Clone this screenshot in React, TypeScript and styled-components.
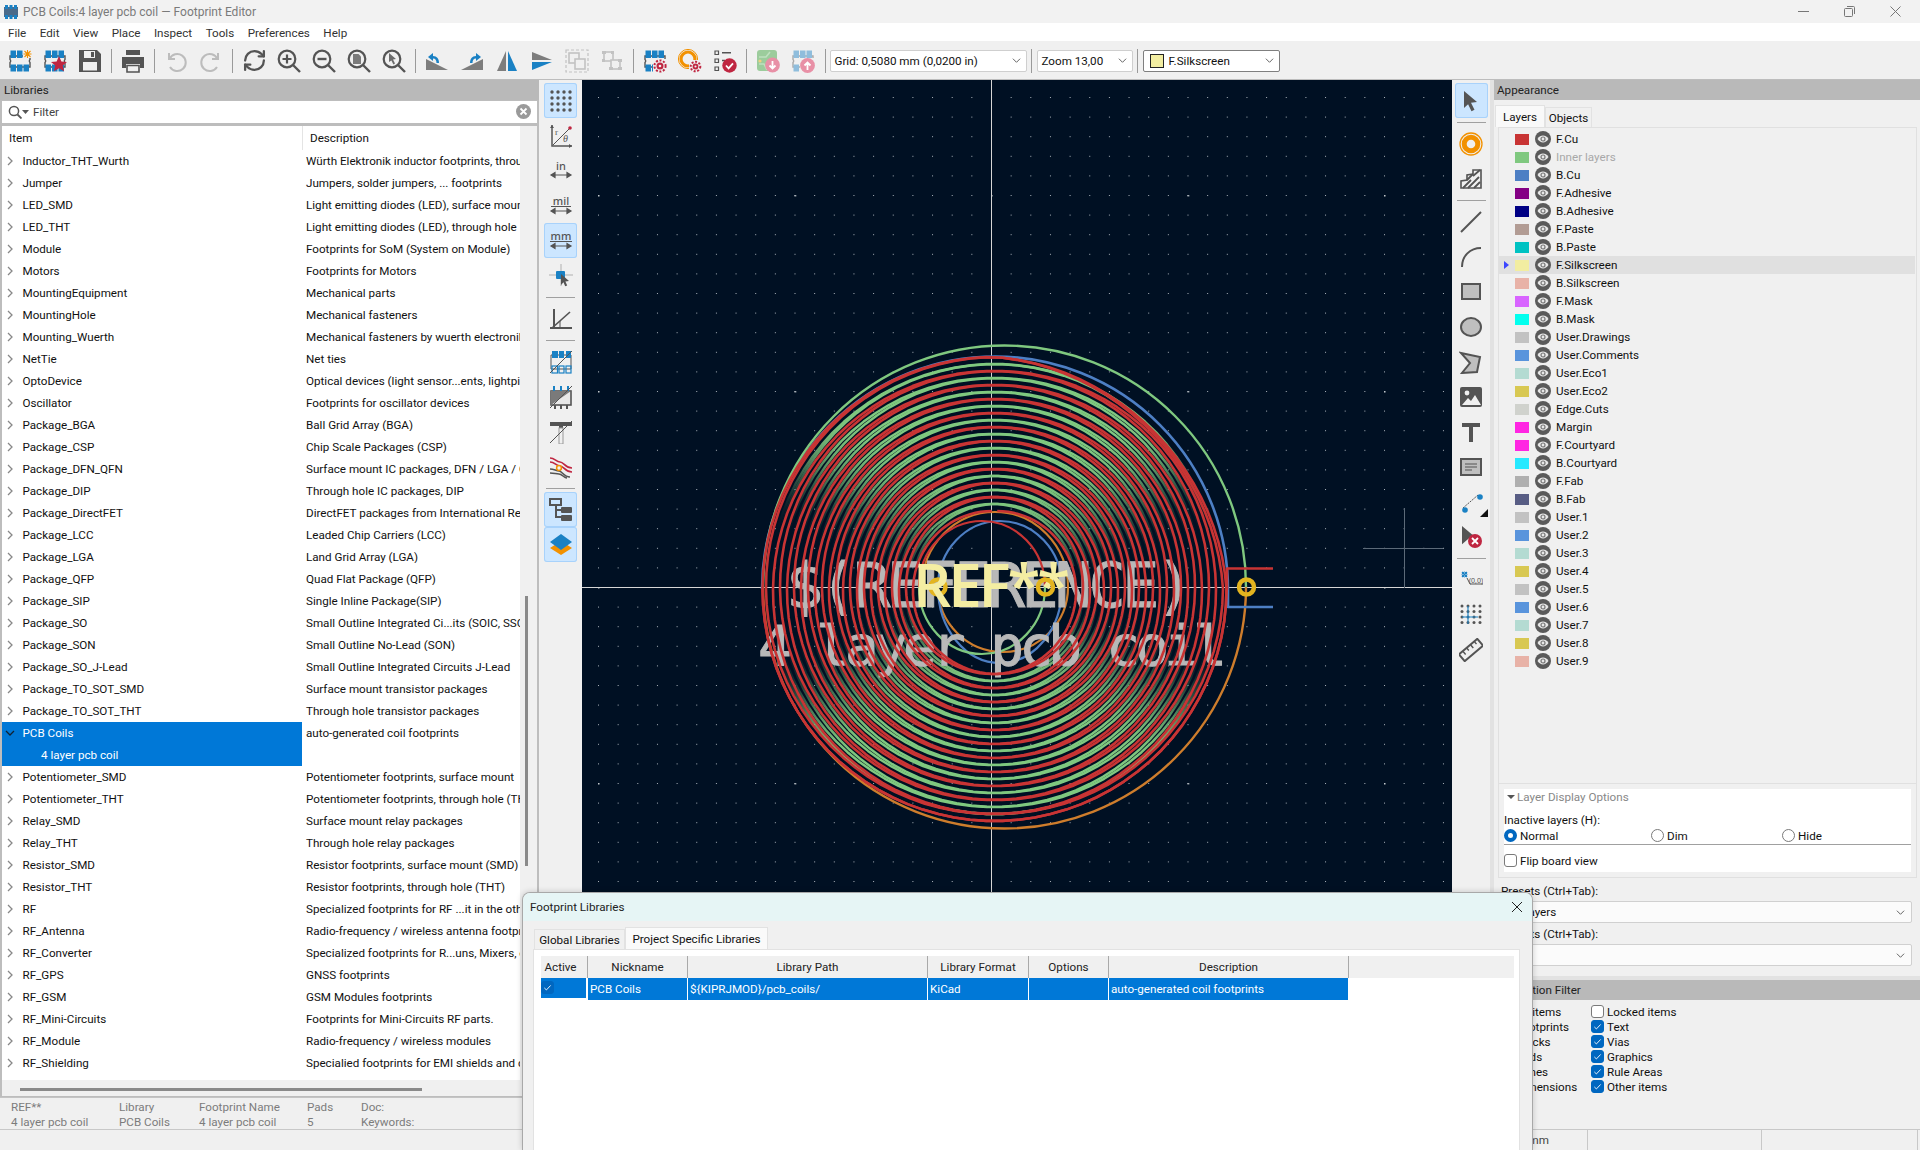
import React from 'react';
import styled, { createGlobalStyle } from 'styled-components';
import { RefreshCw } from 'lucide-react';

const UI = 'Roboto, "Noto Sans", sans-serif';
const DK = '#545454';
const BL = '#1a81c4';
const RD = '#bf2641';
const OR = '#f29100';

const Global = createGlobalStyle`
  html, body { margin: 0; padding: 0; width: 1920px; height: 1150px; overflow: hidden; background: #f0f0f0; }
  #root { width: 1920px; height: 1150px; }
  * { box-sizing: border-box; }
`;

const Win = styled.div`
  position: relative; width: 1920px; height: 1150px; display: flex; flex-direction: column;
  font: 11.65px/12px ${UI}; color: #111; overflow: hidden; background: #f0f0f0;
`;
const TitleBar = styled.div`
  height: 23px; flex: none; display: flex; align-items: center; background: #f2f2f2; color: #7a7a7a; padding-left: 3px; font-size: 12px;
`;
const TitleText = styled.span`margin-left: 4px; flex: 1;`;
const WinControls = styled.div`display: flex; gap: 35px; padding-right: 19px; align-items: center;`;
const MenuBar = styled.div`height: 18px; flex: none; background: #fff; display: flex; align-items: center; padding: 1px 0 0 8px; gap: 13.5px; color: #333;`;
const TopBar = styled.div`
  height: 39px; flex: none; display: flex; align-items: center; padding: 1px 0 0 2.5px; background: #f0f0f0; border-bottom: 1px solid #bdbdbd;
`;
const Slot = styled.div`width: 35px; height: 37px; display: flex; align-items: center; justify-content: center; flex: none;`;
const VSep = styled.div<{ $m?: number }>`width: 1px; height: 24px; background: #9a9a9a; margin: 0 ${p => p.$m ?? 3.5}px; flex: none;`;
const Select = styled.div<{ $w: number; $strong?: boolean }>`
  width: ${p => p.$w}px; height: 22px; flex: none; background: #fff; border: 1px solid ${p => (p.$strong ? '#7f7f7f' : '#cfcfcf')}; border-radius: 2px;
  display: flex; align-items: center; padding: 0 5px 0 4px; color: #111; white-space: nowrap; overflow: hidden;
`;
const SelText = styled.span`flex: 1;`;
const Swatch = styled.span`width: 14px; height: 14px; background: #f2eda1; border: 1px solid #222; margin: 0 5px 0 2px;`;
const Main = styled.div`flex: 1; min-height: 0; display: flex;`;
const LeftCol = styled.div`width: 539px; flex: none; display: flex; flex-direction: column;`;
const Panel = styled.div`flex: 1; min-height: 0; display: flex; flex-direction: column; background: #bdbdbd; padding: 0 2px 1px 2px;`;
const PanelHead = styled.div`height: 20px; flex: none; background: #b9b9b9; display: flex; align-items: center; margin: 0 -2px; padding-left: 4px; color: #222;`;
const AppearanceHead = styled(PanelHead)`margin: 0; padding-left: 3px;`;
const Filter = styled.div`height: 22px; flex: none; margin-top: 1px; background: #fff; display: flex; align-items: center; padding: 0 6px 1px 6px; color: #444;`;
const FilterText = styled.span`flex: 1; margin-left: 4px;`;
const Tree = styled.div`flex: 1; min-height: 0; margin-top: 3px; display: grid; grid-template-columns: 1fr 17px; grid-template-rows: 1fr 16px; background: #fff;`;
const TreeBody = styled.div`overflow: hidden; background: #fff;`;
const TreeHead = styled.div`height: 24px; display: flex; align-items: center; color: #111;`;
const HeadCell = styled.div<{ $w?: number }>`
  width: ${p => (p.$w ? `${p.$w}px` : 'auto')}; height: 100%; display: flex; align-items: center; padding-left: 7px; border-right: ${p => (p.$w ? '1px solid #e4e4e4' : 'none')};
`;
const Row = styled.div`height: 22px; display: flex; align-items: center; white-space: nowrap;`;
const ItemCell = styled.div<{ $sel?: boolean; $child?: boolean }>`
  width: 300px; flex: none; height: 100%; display: flex; align-items: center; padding-left: ${p => (p.$child ? 39 : 0)}px;
  background: ${p => (p.$sel ? '#0078d7' : 'transparent')}; color: ${p => (p.$sel ? '#fff' : '#111')};
`;
const Twist = styled.svg`width: 12px; height: 12px; margin: 0 6.5px 0 2px; flex: none;`;
const DescCell = styled.div`flex: 1; min-width: 0; overflow: hidden; padding-left: 4px;`;
const VTrack = styled.div`background: #f0f0f0; display: flex; justify-content: center; padding-top: 470px;`;
const VThumb = styled.div`width: 3px; height: 270px; margin-left: -4px; background: #8a8a8a;`;
const HTrack = styled.div`grid-column: 1 / 3; background: #f0f0f0; padding: 8px 0 0 18px;`;
const HThumb = styled.div`width: 402px; height: 3px; background: #8a8a8a;`;
const Msg = styled.div`height: 32px; flex: none; display: flex; padding: 3px 0 0 11px; color: #7c7c7c; background: #f0f0f0; border-top: 1px solid #c4c4c4;`;
const MsgCol = styled.div<{ $w: number }>`width: ${p => p.$w}px; flex: none; display: flex; flex-direction: column; gap: 3px; line-height: 12px;`;
const ToolCol = styled.div<{ $w: number }>`width: ${p => p.$w}px; flex: none; display: flex; flex-direction: column; align-items: center; background: #f0f0f0; padding-top: 3px;`;
const RToolCol = styled(ToolCol)`border-right: 4px solid #e2e2e2;`;
const ToolBtn = styled.div<{ $on?: boolean }>`
  width: 33px; height: 35px; flex: none; display: flex; align-items: center; justify-content: center; border-radius: 3px;
  position: relative;
  background: ${p => (p.$on ? '#cce6ff' : 'transparent')};
  box-shadow: ${p => (p.$on ? 'inset 0 0 0 1px #a8d2fb' : 'none')};
`;
const HSep = styled.div`width: 29px; height: 1px; background: #a0a0a0; flex: none; margin: 3.5px 0;`;
const Canvas = styled.div`width: 870px; flex: none; background: #001023; overflow: hidden;`;
const Board = styled.svg`display: block;`;
const RightCol = styled.div`flex: 1; min-width: 0; display: flex; flex-direction: column; background: #f0f0f0;`;
const Tabs = styled.div`display: flex; align-items: flex-end; height: 27px; flex: none; padding-left: 1px;`;
const TabBtn = styled.div<{ $on?: boolean; $w: number }>`
  width: ${p => p.$w}px; height: ${p => (p.$on ? 22 : 20)}px; display: flex; align-items: center; justify-content: center;
  background: ${p => (p.$on ? '#f9f9f9' : '#f0f0f0')}; border: 1px solid #e2e2e2; border-bottom: none;
`;
const Layers = styled.div`height: 657px; flex: none; margin-left: 4px; margin-right: 3px; border: 1px solid #e0e0e0; padding-top: 2px;`;
const LayerRow = styled.div<{ $sel?: boolean }>`
  height: 18px; display: flex; align-items: center; padding-left: 5px; background: ${p => (p.$sel ? '#e0e0e0' : 'transparent')}; margin-right: 1px;
`;
const Marker = styled.span<{ $on?: boolean }>`
  width: 0; height: 0; border-style: solid; border-width: 4px 0 4px 5px; border-color: transparent transparent transparent ${p => (p.$on ? '#3c46ff' : 'transparent')};
`;
const Chip = styled.span<{ $c: string }>`width: 14px; height: 11px; background: ${p => p.$c}; margin-left: 6px;`;
const Eye = styled.svg`width: 16px; height: 16px; display: block; flex: none; margin-left: 6px;`;
const LayerName = styled.span<{ $dim?: boolean }>`margin-left: 5px; color: ${p => (p.$dim ? '#a8a8a8' : '#111')};`;
const Options = styled.div`height: 94px; flex: none; margin: 0 3px 0 4px; border: 1px solid #e0e0e0; border-top: none; padding: 5px 5px 0 5px;`;
const OptInner = styled.div`background: #fff; height: 83px; display: flex; flex-direction: column; padding-top: 2px;`;
const OptHead = styled.div`display: flex; align-items: center; color: #888; height: 12px; padding-left: 3px; gap: 2px;`;
const OptLabel = styled.div`margin-top: 11px; height: 12px;`;
const RadioRow = styled.div`display: grid; grid-template-columns: 147px 131px 1fr; height: 16px; margin-top: 3px; align-items: center; border-bottom: 1px solid #a0a0a0; padding-bottom: 2px;`;
const RadioItem = styled.label`display: flex; align-items: center; gap: 3px;`;
const Radio = styled.span<{ $on?: boolean }>`
  width: 13px; height: 13px; border-radius: 50%; background: #fff; border: ${p => (p.$on ? '4px solid #0067c0' : '1px solid #7a7a7a')};
`;
const CheckRow = styled.label<{ $mt?: number }>`display: flex; align-items: center; gap: 3px; height: 15px; margin-top: ${p => p.$mt ?? 0}px;`;
const Box = styled.span<{ $on?: boolean }>`
  width: 13px; height: 13px; flex: none; border-radius: 3px; display: flex; align-items: center; justify-content: center;
  background: ${p => (p.$on ? '#0067c0' : '#fff')}; border: 1px solid ${p => (p.$on ? '#0067c0' : '#7a7a7a')};
`;
const Preset = styled.div`flex: none; padding: 7px 8px 0 7px; display: flex; flex-direction: column;`;
const PresetLabel = styled.div`height: 12px;`;
const PresetSelect = styled.div`height: 22px; margin: 4px 0 5px -1px; background: #fbfbfb; border: 1px solid #d0d0d0; border-radius: 2px; display: flex; align-items: center; padding: 0 6px 0 5px;`;
const SelFilterHead = styled(PanelHead)`margin: 9px 0 0 0; padding-left: 10px; box-shadow: 0 -4px 0 #e2e2e2;`;
const FilterGrid = styled.div`display: grid; grid-template-columns: 91px 1fr; padding: 4px 0 0 6px; flex: 1;`;
const FilterCol = styled.div`display: flex; flex-direction: column;`;
const StatusBar = styled.div`height: 21px; flex: none; display: flex; border-top: 1px solid #c8c8c8; background: #f0f0f0;`;
const StatusCell = styled.div<{ $w: number }>`width: ${p => p.$w}px; flex: none; height: 100%; border-right: 1px solid #c8c8c8; display: flex; align-items: center; justify-content: flex-end; padding-right: 38px; color: #444;`;
const Dialog = styled.div`
  position: absolute; left: 522px; top: 892px; width: 1011px; height: 258px; background: #f0f0f0; border: 1px solid #a8a8a8; border-bottom: none;
  border-radius: 8px 8px 0 0; display: flex; flex-direction: column; overflow: hidden; box-shadow: 0 0 6px rgba(0,0,0,.18);
`;
const DialogTitle = styled.div`height: 28px; flex: none; background: #e6f5f5; display: flex; align-items: center; padding: 0 9px 0 7px; justify-content: space-between; color: #222;`;
const DialogTabs = styled.div`height: 28px; flex: none; display: flex; align-items: flex-end; padding-left: 11px;`;
const DialogTab = styled(TabBtn)`background: ${p => (p.$on ? '#fafafa' : '#f0f0f0')};`;
const DialogBody = styled.div`flex: 1; margin: 0 12px 0 10px; background: #fff; border: 1px solid #e2e2e2; border-bottom: none; padding: 6px 5px 0 7px;`;
const Grid = styled.div`display: grid; grid-template-columns: 47px 100px 240px 101px 80px 240px 1fr; grid-auto-rows: 22px;`;
const GridHead = styled.div<{ $last?: boolean; $left?: boolean }>`
  background: #f0f0f0; display: flex; align-items: center; justify-content: center; color: #222; padding-right: ${p => (p.$left ? 7 : 0)}px; border-right: ${p => (p.$last ? 'none' : '1px solid #a9a9a9')};
`;
const GridCell = styled.div`background: #0078d7; color: #fff; display: flex; align-items: center; padding: 0 0 1px 2px; border-right: 1px solid #fff; white-space: nowrap; overflow: hidden;`;
const ActiveCell = styled(GridCell)`padding: 0 0 1px 0; border-bottom: 2px solid #fff; border-right: 2px solid #fff;`;

const Ic = styled.svg<{ $s?: number }>`width: ${p => p.$s ?? 24}px; height: ${p => p.$s ?? 24}px; display: block; flex: none;`;

const Icon: React.FC<{ s?: number; children: React.ReactNode }> = ({ s, children }) => (
  <Ic $s={s} viewBox="0 0 24 24" fill="none">{children}</Ic>
);

const Gear = ({ x, y, r = 4, c = RD }: { x: number; y: number; r?: number; c?: string }) => (
  <g>
    <circle cx={x} cy={y} r={r + 1.2} stroke={c} strokeWidth={2} strokeDasharray="2 1.6" />
    <circle cx={x} cy={y} r={r * 0.55} stroke={c} strokeWidth={r * 0.5} />
  </g>
);

const FpBody = ({ op = 1 }: { op?: number }) => (
  <g opacity={op}>
    <path d="M2 7h20v3.5a2 2 0 0 0 0 3V18H2v-4.5a2 2 0 0 0 0-3z" stroke={DK} strokeWidth={1.4} />
    {[2.5, 9, 15.5].map(x => <rect key={x} x={x} y="1.5" width="5.5" height="7.5" fill={BL} />)}
    {[2.5, 9, 15.5].map(x => <rect key={x} x={x} y="15.5" width="5.5" height="7" fill={BL} />)}
  </g>
);

const Mag = ({ children }: { children?: React.ReactNode }) => (
  <g>
    <circle cx="10" cy="10" r="8.3" stroke={DK} strokeWidth="2.2" />
    <path d="M16 16l7 7" stroke={DK} strokeWidth="2.4" />
    {children}
  </g>
);

const UnitText = styled.text`font: 500 11px "Noto Sans", sans-serif; fill: ${DK}; text-anchor: middle;`;

const ICONS: Record<string, React.ReactNode> = {
  newfp: <><FpBody /><rect x="15" y="0" width="9" height="9" fill="#f0f0f0" /><path d="M19.5 1v8M15.5 5h8M16.5 2l6 6M22.5 2l-6 6" stroke={OR} strokeWidth="1.1" /></>,
  starfp: <><FpBody /><path d="M16 7l2.4 5.4 5.6.5-4.3 3.7 1.4 5.7-5.1-3-5.1 3 1.4-5.7L8 12.9l5.6-.5z" fill={RD} /></>,
  save: <><path d="M1 1h18l4 4v18H1z" fill={DK} /><rect x="6" y="2" width="11" height="7" fill="#f0f0f0" /><rect x="13" y="3" width="3" height="5" fill={DK} /><rect x="5" y="13" width="14" height="8.5" fill="#f0f0f0" /></>,
  print: <><path d="M5 1h14v5H5zM1 8h22v11h-4v-4H5v4H1z" fill={DK} /><path d="M6 16.5h12V23H6z" stroke={DK} strokeWidth="1.6" /></>,
  undo: <path d="M5 4v6h6M5.5 10A8.5 8.5 0 1 1 6 18" stroke="#bcbcbc" strokeWidth="2" />,
  redo: <path d="M19 4v6h-6M18.5 10A8.5 8.5 0 1 0 18 18" stroke="#bcbcbc" strokeWidth="2" />,
  zin: <Mag><path d="M10 5.5v9M5.5 10h9" stroke={DK} strokeWidth="2.2" /></Mag>,
  zout: <Mag><path d="M5.5 10h9" stroke={DK} strokeWidth="2.4" /></Mag>,
  zfit: <Mag><path d="M6 5h5.5L14 7.5V15H6z" fill={DK} opacity=".75" /></Mag>,
  zsel: <Mag><path d="M7 4l7 6-3 .6 2 4-1.6.8-2-4L7 13z" fill={DK} opacity=".85" /></Mag>,
  rotl: <><path d="M1 21V10l22 11z" fill="#7d7d7d" /><path d="M14 14c0-4-2-7-6-7V4L3 8l5 4V9.5c2.5 0 3.5 2 3.5 4.5z" fill={BL} /></>,
  rotr: <><path d="M23 21V10L1 21z" fill="#7d7d7d" /><path d="M10 14c0-4 2-7 6-7V4l5 4-5 4V9.5c-2.5 0-3.5 2-3.5 4.5z" fill={BL} /></>,
  mirv: <><path d="M11 2v20H2z" fill="#7d7d7d" /><path d="M13 2v20h9z" fill={BL} /></>,
  mirh: <><path d="M2 3l20 8H2z" fill="#7d7d7d" /><path d="M2 13h20L2 21z" fill={BL} /></>,
  group: <><path d="M1 1h22v22H1z" stroke="#c2c2c2" strokeWidth="1.2" strokeDasharray="3 2" /><rect x="4" y="4" width="10" height="10" stroke="#c2c2c2" strokeWidth="1.6" /><rect x="10" y="10" width="10" height="10" fill="#f0f0f0" stroke="#c2c2c2" strokeWidth="1.6" /></>,
  ungroup: <><rect x="4" y="3" width="9" height="9" stroke="#c2c2c2" strokeWidth="1.6" /><rect x="11" y="11" width="9" height="9" fill="#f0f0f0" stroke="#c2c2c2" strokeWidth="1.6" /><path d="M2 2h4v3H2zM11 2h3v3h-3zM2 10h3v3H2zM18 10h4v3h-4zM18 18h4v3h-4zM9 18h4v3H9z" fill="#c2c2c2" /></>,
  fpgear: <><FpBody /><rect x="10" y="10" width="14" height="14" fill="#f0f0f0" /><Gear x={17} y={17} r={4.4} /></>,
  ringgear: <><circle cx="10" cy="10" r="7" stroke={OR} strokeWidth="3.2" /><circle cx="10" cy="10" r="9.6" stroke={OR} strokeWidth="1" /><rect x="11" y="11" width="13" height="13" fill="#f0f0f0" /><Gear x={17.5} y={17.5} r={3.6} /></>,
  checks: <><path d="M2 2h3.5v3.5H2zM2 10h3.5v3.5H2zM2 18h3.5v3.5H2z" stroke={DK} strokeWidth="1.2" /><path d="M9 3.8h9M9 11.5h3" stroke={DK} strokeWidth="1.4" /><circle cx="16.5" cy="16.5" r="7.2" fill={RD} /><path d="M13 16.5l2.6 2.8 4.4-5" stroke="#fff" strokeWidth="1.8" /></>,
  load: <><rect x="1" y="1" width="20" height="21" rx="3" fill="#9ccc9c" /><path d="M3 8h7l4-5M3 15h5l3 6" stroke="#bfe0bf" strokeWidth="1.6" /><circle cx="4" cy="12" r="1.6" fill="#f0d080" /><circle cx="16.5" cy="16" r="7.4" fill="#e890a6" /><path d="M16.5 12v7M13.5 16.5l3 3 3-3" stroke="#fff" strokeWidth="1.8" /></>,
  save2: <><g opacity=".45"><FpBody /></g><rect x="9" y="9" width="15" height="15" fill="#f0f0f0" /><circle cx="16.5" cy="16.5" r="7.4" fill="#e890a6" /><path d="M16.5 21v-7M13.5 16.5l3-3 3 3" stroke="#fff" strokeWidth="1.8" /></>,
  grid: <>{[3, 9, 15, 21].map(y => [3, 9, 15, 21].map(x => <circle key={`${x}${y}`} cx={x} cy={y} r="1.7" fill={DK} />))}</>,
  polar: <><path d="M3 1v21h20" stroke={DK} strokeWidth="1.5" /><path d="M1 4l2-3 2 3M20 20l3 2-3 2" fill={DK} /><path d="M4 21L21 4" stroke={DK} strokeWidth="1" /><circle cx="21" cy="4" r="1.8" fill={RD} /><text x="6" y="11" fontSize="9" fontFamily="Liberation Serif, serif" fill={DK}>r</text><text x="14" y="18" fontSize="10" fontStyle="italic" fontFamily="Liberation Serif, serif" fill={DK}>θ</text></>,
  in: <><UnitText x="12" y="11">in</UnitText><path d="M2 16h20M2 16l4-2.5v5zM22 16l-4-2.5v5z" stroke={DK} strokeWidth="1.2" fill={DK} /></>,
  mil: <><UnitText x="12" y="11">mil</UnitText><path d="M2 12.5h20" stroke={DK} /><path d="M2 17h20M2 17l4-2.5v5zM22 17l-4-2.5v5z" stroke={DK} strokeWidth="1.2" fill={DK} /></>,
  mm: <><UnitText x="12" y="11">mm</UnitText><path d="M1 12.5h22" stroke={DK} /><path d="M2 17h20M2 17l4-2.5v5zM22 17l-4-2.5v5z" stroke={DK} strokeWidth="1.2" fill={DK} /></>,
  snap: <><path d="M12 0v22M0 11h24" stroke="#a8a8a8" strokeWidth=".9" /><rect x="7" y="7" width="9" height="8" rx="1" fill={BL} /><path d="M12 10l8 7-3.6.5 1.8 4-2 .8-1.7-4-2.5 2.6z" fill={DK} /></>,
  axes: <><path d="M5 2v20M1 21h22" stroke={DK} strokeWidth="2" /><path d="M3 21L21 5" stroke={DK} strokeWidth="1.6" /><path d="M11 21v-7" stroke={DK} /></>,
  fpmode: <><path d="M2 5h20v14H2z" stroke={DK} strokeWidth="1" /><rect x="3" y="1" width="6" height="7" fill={BL} /><rect x="10" y="1" width="5" height="7" fill={BL} /><rect x="17" y="1" width="5" height="7" fill={BL} /><g stroke={BL} strokeWidth="1.2"><rect x="3" y="16" width="5.5" height="7" /><rect x="10" y="16" width="5" height="7" /><rect x="17" y="16" width="5" height="7" /></g><path d="M1 23L23 1" stroke={DK} strokeWidth="1" /></>,
  padmode: <><rect x="2" y="6" width="20" height="14" fill="#e8e8e8" stroke={DK} strokeWidth="1.6" /><path d="M2 6h20L2 20z" fill="#7a7a7a" /><path d="M5 1v5M12 1v5M19 1v5" stroke={BL} strokeWidth="2" /><path d="M6 20v4M12 20v4M18 20v4" stroke={DK} strokeWidth="2" /><path d="M1 23L23 1" stroke={DK} /></>,
  textmode: <><path d="M1 2h22v4H14v18h-4V6H1z" fill={DK} /><rect x="10" y="8" width="4" height="16" fill="#f0f0f0" stroke="#9a9a9a" /><path d="M1 23L23 1" stroke={DK} /></>,
  tracks: <><path d="M1 3c5 0 6 4 10 4s5 6 12 6" stroke={RD} strokeWidth="1.6" /><path d="M1 7c5 0 6 4 10 4s5 6 12 6" stroke={RD} strokeWidth="1.6" /><path d="M1 14c4 0 6 2 9 2s5 6 11 6M1 18c4 0 6 1 9 1s5 4 8 4" stroke={DK} strokeWidth="1.6" /><circle cx="10" cy="13" r="2.4" fill="#f0f0f0" stroke={OR} strokeWidth="1.5" /></>,
  tree: <><rect x="1" y="1" width="11" height="6" stroke={DK} strokeWidth="2" /><path d="M7 7v12h5M7 12h5" stroke={DK} strokeWidth="2" /><rect x="12" y="9" width="11" height="6" fill={DK} rx="1" /><rect x="12" y="17" width="11" height="6" fill={DK} rx="1" /></>,
  layers: <><path d="M12 8l11 7-11 7-11-7z" fill={OR} /><path d="M12 1l11 8-11 8-11-8z" fill={BL} /></>,
  cursor: <path d="M5 2l13 11-6 .7 3.5 7-3 1.5-3.4-7L5 19z" fill={DK} />,
  via: <><circle cx="12" cy="12" r="11" stroke={OR} strokeWidth="1.3" /><circle cx="12" cy="12" r="6.8" stroke={OR} strokeWidth="5" /></>,
  zone: <><path d="M2 21v-7l6-1V8l6-1V3h8v18z" fill="#f0f0f0" stroke={DK} strokeWidth="1.6" /><path d="M4 21l8-8M9 21l11-11M15 21l6-6M8 13l6-6M14 9l7-6" stroke={DK} strokeWidth="1.8" /></>,
  line: <path d="M2 22L22 2" stroke={DK} strokeWidth="2" />,
  arc: <path d="M3 22C3 11 11 3 22 3" stroke={DK} strokeWidth="2" />,
  rect: <rect x="3" y="4" width="18" height="15" fill="#bfbfbf" stroke={DK} strokeWidth="2" />,
  circle: <ellipse cx="12" cy="12" rx="10" ry="9" fill="#bfbfbf" stroke={DK} strokeWidth="2" />,
  poly: <path d="M2 3l19 4-3 15-15 1 8-10z" fill="#bfbfbf" stroke={DK} strokeWidth="2" />,
  image: <><rect x="1" y="2" width="22" height="20" rx="2" fill={DK} /><circle cx="8" cy="8" r="2.4" fill="#f0f0f0" /><path d="M3 20l6-7 3 3 4-6 6 10z" fill="#f0f0f0" /></>,
  ttext: <path d="M3 3h18v4h-7v15h-4V7H3z" fill={DK} />,
  tbox: <><rect x="2" y="4" width="20" height="16" fill="#bfbfbf" stroke={DK} strokeWidth="2" /><path d="M6 9h12M6 12h12M6 15h7" stroke={DK} strokeWidth="1.1" /></>,
  dim: <><path d="M4 18L19 5" stroke={DK} strokeWidth="1" strokeDasharray="2 1" /><circle cx="6" cy="20" r="2.8" fill={BL} /><circle cx="21" cy="7" r="2.8" fill={BL} /></>,
  delete: <><path d="M3 1l13 11-6 1.2-7 6z" fill={DK} /><circle cx="16" cy="16" r="7" fill={RD} /><path d="M13 13l6 6M19 13l-6 6" stroke="#fff" strokeWidth="1.8" /></>,
  origin: <><path d="M3 9l5-5M3 4l5 5" stroke={BL} strokeWidth="1.2" /><circle cx="5.5" cy="6.5" r="2.4" stroke={BL} /><path d="M8 10l3 6h13" stroke={DK} /><text x="10" y="15" fontSize="7" fontFamily="Noto Sans, sans-serif" fill={DK}>(0,0)</text></>,
  gridorigin: <>{[3, 8.5, 14, 19.5].map(y => [3, 9, 15, 21].map(x => <circle key={`${x}-${y}`} cx={x} cy={y} r="1.5" fill={DK} />))}<path d="M9 3v18M3 14h16" stroke={BL} strokeWidth="1.1" /></>,
  ruler: <g transform="rotate(-40 12 12)"><rect x="0" y="7.5" width="24" height="9" stroke={DK} strokeWidth="2" /><path d="M5 8v4M10 8v3M15 8v4M20 8v3" stroke={DK} strokeWidth="1.4" /></g>,
};

const I: React.FC<{ n: string; s?: number }> = ({ n, s }) => <Icon s={s}>{ICONS[n]}</Icon>;

const Chevron = ({ c = '#555' }: { c?: string }) => (
  <Ic $s={9} viewBox="0 0 10 10" fill="none"><path d="M1 3l4 4 4-4" stroke={c} strokeWidth="1" /></Ic>
);

const LIBS: [string, string][] = [
  ['Inductor_THT_Wurth', 'Würth Elektronik inductor footprints, through hole'],
  ['Jumper', 'Jumpers, solder jumpers, ... footprints'],
  ['LED_SMD', 'Light emitting diodes (LED), surface mount'],
  ['LED_THT', 'Light emitting diodes (LED), through hole'],
  ['Module', 'Footprints for SoM (System on Module)'],
  ['Motors', 'Footprints for Motors'],
  ['MountingEquipment', 'Mechanical parts'],
  ['MountingHole', 'Mechanical fasteners'],
  ['Mounting_Wuerth', 'Mechanical fasteners by wuerth electronik'],
  ['NetTie', 'Net ties'],
  ['OptoDevice', 'Optical devices (light sensor...ents, lightpipes'],
  ['Oscillator', 'Footprints for oscillator devices'],
  ['Package_BGA', 'Ball Grid Array (BGA)'],
  ['Package_CSP', 'Chip Scale Packages (CSP)'],
  ['Package_DFN_QFN', 'Surface mount IC packages, DFN / LGA / QFN'],
  ['Package_DIP', 'Through hole IC packages, DIP'],
  ['Package_DirectFET', 'DirectFET packages from International Rectifier'],
  ['Package_LCC', 'Leaded Chip Carriers (LCC)'],
  ['Package_LGA', 'Land Grid Array (LGA)'],
  ['Package_QFP', 'Quad Flat Package (QFP)'],
  ['Package_SIP', 'Single Inline Package(SIP)'],
  ['Package_SO', 'Small Outline Integrated Ci...its (SOIC, SSOP'],
  ['Package_SON', 'Small Outline No-Lead (SON)'],
  ['Package_SO_J-Lead', 'Small Outline Integrated Circuits J-Lead'],
  ['Package_TO_SOT_SMD', 'Surface mount transistor packages'],
  ['Package_TO_SOT_THT', 'Through hole transistor packages'],
  ['PCB Coils', 'auto-generated coil footprints'],
  ['Potentiometer_SMD', 'Potentiometer footprints, surface mount'],
  ['Potentiometer_THT', 'Potentiometer footprints, through hole (THT)'],
  ['Relay_SMD', 'Surface mount relay packages'],
  ['Relay_THT', 'Through hole relay packages'],
  ['Resistor_SMD', 'Resistor footprints, surface mount (SMD)'],
  ['Resistor_THT', 'Resistor footprints, through hole (THT)'],
  ['RF', 'Specialized footprints for RF ...it in the other'],
  ['RF_Antenna', 'Radio-frequency / wireless antenna footprints'],
  ['RF_Converter', 'Specialized footprints for R...uns, Mixers, etc'],
  ['RF_GPS', 'GNSS footprints'],
  ['RF_GSM', 'GSM Modules footprints'],
  ['RF_Mini-Circuits', 'Footprints for Mini-Circuits RF parts.'],
  ['RF_Module', 'Radio-frequency / wireless modules'],
  ['RF_Shielding', 'Specialied footprints for EMI shields and cans'],
];

const LAYERS: [string, string][] = [
  ['F.Cu', '#c83434'], ['Inner layers', '#7fc87f'], ['B.Cu', '#4d7fc4'], ['F.Adhesive', '#840084'], ['B.Adhesive', '#000084'],
  ['F.Paste', '#b29c94'], ['B.Paste', '#00c2c2'], ['F.Silkscreen', '#f2eda1'], ['B.Silkscreen', '#e8b2a7'], ['F.Mask', '#d864ff'],
  ['B.Mask', '#02ffee'], ['User.Drawings', '#c2c2c2'], ['User.Comments', '#5994dc'], ['User.Eco1', '#b4dbd2'], ['User.Eco2', '#d8c852'],
  ['Edge.Cuts', '#d0d2cd'], ['Margin', '#ff26e2'], ['F.Courtyard', '#ff26e2'], ['B.Courtyard', '#26e9ff'], ['F.Fab', '#afafaf'],
  ['B.Fab', '#585d84'], ['User.1', '#c2c2c2'], ['User.2', '#5994dc'], ['User.3', '#b4dbd2'], ['User.4', '#d8c852'],
  ['User.5', '#c2c2c2'], ['User.6', '#5994dc'], ['User.7', '#b4dbd2'], ['User.8', '#d8c852'], ['User.9', '#e8b2a7'],
];

const P = 14;
const CX = 994.5;
const CY = 589;
function spiral(start: number, dir: number, shift: number, rMin = 78): string {
  const pts: string[] = [];
  for (let t = 0; t < 7000; t += 4) {
    const ang = ((start + dir * t) * Math.PI) / 180;
    let r = Math.min(232 - shift, 232 - shift + P * 0.75 - (P * t) / 360);
    // the first turn pulls inward on the upper right
    const deg = (((start + dir * t) % 360) + 360) % 360;
    if (t < 400 && deg > 270 && shift === 0) r -= 8 * Math.sin(((deg - 270) * 2 * Math.PI) / 180);
    if (r < rMin) break;
    pts.push(`${(CX + r * Math.cos(ang)).toFixed(1)} ${(CY + r * Math.sin(ang)).toFixed(1)}`);
  }
  return `M${pts.join('L')}`;
}
const RED_A = spiral(0, 1, 0);
const RED_B = spiral(180, -1, 0);
const GRN_A = spiral(0, 1, P / 2, 82);
const GRN_B = spiral(180, -1, P / 2, 82);

// the inner-layer turns fade out towards the sides, where they sit under the red ones
const wx = 400 * Math.tan((58 * Math.PI) / 180);
const WEDGES = `M${CX} ${CY}L${CX - wx} ${CY - 400}H${CX + wx}ZM${CX} ${CY}L${CX - wx} ${CY + 400}H${CX + wx}Z`;

const FabText = styled.text`font-family: "DejaVu Sans Mono", monospace; fill: #b8b8b8; stroke: #b8b8b8; stroke-width: 1;`;
const SilkText = styled.text`font-family: "Open Sans", sans-serif; font-weight: 600; font-size: 60px; fill: #f4eda2;`;

const PCB = () => (
  <Board width={870} height={1049} viewBox="582 80 870 1049">
    <defs>
      <pattern id="gridA" x="991" y="587" width="19.65" height="19.6" patternUnits="userSpaceOnUse">
        <rect x="0" y="0" width="1" height="1" fill="#aab2ba" />
      </pattern>
      <pattern id="gridB" x="991" y="587" width="196.5" height="196" patternUnits="userSpaceOnUse">
        <rect x="-0.5" y="-0.5" width="2" height="2" fill="#c4c9ce" />
      </pattern>
      <filter id="soft" filterUnits="userSpaceOnUse" x="582" y="80" width="870" height="1049">
        <feGaussianBlur stdDeviation="32" />
      </filter>
      <mask id="wedges" maskUnits="userSpaceOnUse" x="582" y="80" width="870" height="1049">
        <path d={WEDGES} fill="#fff" filter="url(#soft)" />
      </mask>
    </defs>
    <rect x="582" y="80" width="870" height="1049" fill="url(#gridA)" />
    <rect x="582" y="80" width="870" height="1049" fill="url(#gridB)" />
    <path d="M991.5 80V1129M582 587.5H1452" stroke="#d6d6d6" strokeWidth="1" />
    <path d="M1404.5 508v80M1363 548.5h80" stroke="#5c6a78" strokeWidth="1" />

    <g fill="none" strokeLinejoin="round">
      <path d="M1246 587A241.5 241.5 0 0 1 763 587" stroke="#ce7d2c" strokeWidth="2.4" />
      <path d="M938 587A65 65 0 0 0 1068 587A73 75 0 0 0 922 587" stroke="#ce7d2c" strokeWidth="2.2" />
      <path d="M1273 607H1228V590A233 233 0 0 0 762 589" stroke="#4d7fc4" strokeWidth="2.6" />
      <path d="M938 587A62 66 0 0 1 1062 587A62 76 0 0 1 938 587" stroke="#4d7fc4" strokeWidth="2.2" />
      <path d="M1246 587A241.5 241.5 0 0 0 763 587" stroke="#7fc87f" strokeWidth="2.4" />
      <path d="M1045 587A63 67 0 0 1 919 587" stroke="#7fc87f" strokeWidth="2.2" />
      <g mask="url(#wedges)">
        <path d={GRN_A} stroke="#7fc87f" strokeWidth="2.5" />
        <path d={GRN_B} stroke="#7fc87f" strokeWidth="2.5" />
      </g>
    </g>
    <FabText x="786" y="607" fontSize="62" textLength="407" lengthAdjust="spacing">$(REFERENCE)</FabText>
    <FabText x="758" y="665" fontSize="56" textLength="469" lengthAdjust="spacing">4 layer pcb coil</FabText>
    <g fill="none" strokeLinejoin="round">
      <path d="M1273 568.5H1227V590" stroke="#c83434" strokeWidth="2.6" />
      <path d={RED_A} stroke="#c83434" strokeWidth="2.6" />
      <path d={RED_B} stroke="#c83434" strokeWidth="2.6" />
      <path d="M1045 587A63 66 0 0 0 919 587" stroke="#c83434" strokeWidth="2.2" />
      <circle cx="938" cy="587" r="7.5" stroke="#e3b41f" strokeWidth="4.5" />
    </g>
    <SilkText x="913" y="607" textLength="157" lengthAdjust="spacing">REF**</SilkText>
    <g fill="none" stroke="#e3b41f" strokeWidth="4.5">
      <circle cx="1045.5" cy="587" r="7.5" />
      <circle cx="1246.5" cy="587" r="7.5" />
    </g>
  </Board>
);

const EyeIcon = () => (
  <Eye viewBox="0 0 16 16" fill="none">
    <circle cx="8" cy="8" r="8" fill="#5a5a5a" />
    <path d="M2.5 8C4 5.6 6 4.6 8 4.6s4 1 5.5 3.4C12 10.4 10 11.4 8 11.4S4 10.4 2.5 8z" fill="#e8e8e8" />
    <circle cx="8" cy="8" r="2" fill="none" stroke="#777" strokeWidth="1.2" />
  </Eye>
);

const WhiteCheck = () => (
  <Ic $s={9} viewBox="0 0 10 10" fill="none"><path d="M1.5 5.5l2.3 2.2 4.7-5" stroke="#fff" strokeWidth="1" /></Ic>
);

const TOP1 = ['newfp', 'starfp', 'save'];
const TOP2 = ['refresh', 'zin', 'zout', 'zfit', 'zsel'];
const TOP3 = ['rotl', 'rotr', 'mirv', 'mirh', 'group', 'ungroup'];

const TopIcon = ({ n }: { n: string }) => (
  <Slot>{n === 'refresh' ? <RefreshCw size={25} color={DK} strokeWidth={2.2} /> : <I n={n} />}</Slot>
);

type ToolItem = { n?: string; on?: boolean; corner?: boolean };
const LEFT_TOOLS: ToolItem[] = [
  { n: 'grid', on: true }, { n: 'polar' }, { n: 'in' }, { n: 'mil' }, { n: 'mm', on: true }, { n: 'snap' }, {},
  { n: 'axes' }, {}, { n: 'fpmode' }, { n: 'padmode' }, { n: 'textmode' }, { n: 'tracks' }, {},
  { n: 'tree', on: true }, { n: 'layers', on: true },
];
const RIGHT_TOOLS: ToolItem[] = [
  { n: 'cursor', on: true }, {}, { n: 'via' }, { n: 'zone' }, {}, { n: 'line' }, { n: 'arc' }, { n: 'rect' }, { n: 'circle' },
  { n: 'poly' }, { n: 'image' }, { n: 'ttext' }, { n: 'tbox' }, { n: 'dim', corner: true }, { n: 'delete' }, {}, { n: 'origin' }, { n: 'gridorigin' }, { n: 'ruler' },
];
const Corner = styled.span`position: absolute; right: 0; bottom: 2px; width: 0; height: 0; border-style: solid; border-width: 0 0 8px 8px; border-color: transparent transparent #111 transparent;`;

const Tools = ({ items }: { items: ToolItem[] }) => (
  <>
    {items.map((t, i) =>
      t.n ? (
        <ToolBtn key={i} $on={t.on}><I n={t.n} />{t.corner && <Corner />}</ToolBtn>
      ) : (
        <HSep key={i} />
      )
    )}
  </>
);

const FILTER_L = ['All items', 'Footprints', 'Tracks', 'Pads', 'Zones', 'Dimensions'];
const FILTER_R = ['Locked items', 'Text', 'Vias', 'Graphics', 'Rule Areas', 'Other items'];

const COLS: [number, string, string][] = [
  [108, 'REF**', '4 layer pcb coil'], [80, 'Library', 'PCB Coils'], [108, 'Footprint Name', '4 layer pcb coil'], [54, 'Pads', '5'], [100, 'Doc:', 'Keywords:'],
];

export default function App() {
  return (
    <Win>
      <Global />
      <TitleBar>
        <Ic $s={16} viewBox="0 0 16 16"><rect x="1" y="3" width="14" height="10" fill="#4a6a8a" /><path d="M2 1h3v4H2zM6.5 1h3v4h-3zM11 1h3v4h-3zM2 11h3v4H2zM6.5 11h3v4h-3zM11 11h3v4h-3z" fill="#1a81c4" /></Ic>
        <TitleText>PCB Coils:4 layer pcb coil — Footprint Editor</TitleText>
        <WinControls>
          <Ic $s={11} viewBox="0 0 11 11" fill="none"><path d="M0 5.5h11" stroke="#777" /></Ic>
          <Ic $s={11} viewBox="0 0 11 11" fill="none"><rect x=".5" y="2.5" width="8" height="8" rx="1" stroke="#777" /><path d="M3 .5h6.5a1 1 0 0 1 1 1V8" stroke="#777" /></Ic>
          <Ic $s={11} viewBox="0 0 11 11" fill="none"><path d="M.5.5l10 10M10.5.5l-10 10" stroke="#777" /></Ic>
        </WinControls>
      </TitleBar>
      <MenuBar>
        {['File', 'Edit', 'View', 'Place', 'Inspect', 'Tools', 'Preferences', 'Help'].map(m => <span key={m}>{m}</span>)}
      </MenuBar>
      <TopBar>
        {TOP1.map(n => <TopIcon key={n} n={n} />)}
        <VSep />
        <TopIcon n="print" />
        <VSep />
        <TopIcon n="undo" /><TopIcon n="redo" />
        <VSep />
        {TOP2.map(n => <TopIcon key={n} n={n} />)}
        <VSep />
        {TOP3.map(n => <TopIcon key={n} n={n} />)}
        <VSep />
        <TopIcon n="fpgear" /><TopIcon n="ringgear" /><TopIcon n="checks" />
        <VSep />
        <TopIcon n="load" /><TopIcon n="save2" />
        <VSep $m={4} />
        <Select $w={197}><SelText>Grid: 0,5080 mm (0,0200 in)</SelText><Chevron /></Select>
        <VSep $m={4.5} />
        <Select $w={96}><SelText>Zoom 13,00</SelText><Chevron /></Select>
        <VSep $m={4.5} />
        <Select $w={137} $strong><Swatch /><SelText>F.Silkscreen</SelText><Chevron /></Select>
      </TopBar>
      <Main>
        <LeftCol>
          <Panel>
            <PanelHead>Libraries</PanelHead>
            <Filter>
              <Ic $s={14} viewBox="0 0 14 14" fill="none"><circle cx="6" cy="6" r="4.6" stroke="#555" strokeWidth="1.5" /><path d="M9.5 9.5l4 4" stroke="#555" strokeWidth="1.8" /></Ic>
              <Ic $s={7} viewBox="0 0 7 7"><path d="M0 2h7L3.5 6z" fill="#555" /></Ic>
              <FilterText>Filter</FilterText>
              <Ic $s={15} viewBox="0 0 15 15" fill="none"><circle cx="7.5" cy="7.5" r="7.5" fill="#9a9a9a" /><path d="M4.5 4.5l6 6M10.5 4.5l-6 6" stroke="#fff" strokeWidth="1.8" /></Ic>
            </Filter>
            <Tree>
              <TreeBody>
                <TreeHead><HeadCell $w={301}>Item</HeadCell><HeadCell>Description</HeadCell></TreeHead>
                {LIBS.map(([a, b]) => {
                  const sel = a === 'PCB Coils';
                  return (
                    <React.Fragment key={a}>
                      <Row>
                        <ItemCell $sel={sel}>
                          <Twist viewBox="0 0 12 12" fill="none">
                            <path d={sel ? 'M2 4l4 4 4-4' : 'M4 2l4 4-4 4'} stroke={sel ? '#123' : '#888'} strokeWidth="1.3" />
                          </Twist>
                          {a}
                        </ItemCell>
                        <DescCell>{b}</DescCell>
                      </Row>
                      {sel && <Row><ItemCell $sel $child>4 layer pcb coil</ItemCell></Row>}
                    </React.Fragment>
                  );
                })}
              </TreeBody>
              <VTrack><VThumb /></VTrack>
              <HTrack><HThumb /></HTrack>
            </Tree>
          </Panel>
          <Msg>
            {COLS.map(([w, a, b]) => <MsgCol key={a} $w={w}><span>{a}</span><span>{b}</span></MsgCol>)}
          </Msg>
        </LeftCol>
        <ToolCol $w={43}><Tools items={LEFT_TOOLS} /></ToolCol>
        <Canvas><PCB /></Canvas>
        <RToolCol $w={42}><Tools items={RIGHT_TOOLS} /></RToolCol>
        <RightCol>
          <AppearanceHead>Appearance</AppearanceHead>
          <Tabs><TabBtn $on $w={50}>Layers</TabBtn><TabBtn $w={47}>Objects</TabBtn></Tabs>
          <Layers>
            {LAYERS.map(([n, c]) => {
              const sel = n === 'F.Silkscreen';
              return (
                <LayerRow key={n} $sel={sel}>
                  <Marker $on={sel} /><Chip $c={c} /><EyeIcon /><LayerName $dim={n === 'Inner layers'}>{n}</LayerName>
                </LayerRow>
              );
            })}
          </Layers>
          <Options>
            <OptInner>
              <OptHead><Ic $s={8} viewBox="0 0 8 8"><path d="M0 2h8L4 6z" fill="#555" /></Ic>Layer Display Options</OptHead>
              <OptLabel>Inactive layers (H):</OptLabel>
              <RadioRow>
                <RadioItem><Radio $on />Normal</RadioItem>
                <RadioItem><Radio />Dim</RadioItem>
                <RadioItem><Radio />Hide</RadioItem>
              </RadioRow>
              <CheckRow $mt={8}><Box />Flip board view</CheckRow>
            </OptInner>
          </Options>
          <Preset>
            <PresetLabel>Presets (Ctrl+Tab):</PresetLabel>
            <PresetSelect><SelText>All Layers</SelText><Chevron /></PresetSelect>
            <PresetLabel>Presets (Ctrl+Tab):</PresetLabel>
            <PresetSelect><SelText>&nbsp;</SelText><Chevron /></PresetSelect>
          </Preset>
          <SelFilterHead>Selection Filter</SelFilterHead>
          <FilterGrid>
            <FilterCol>{FILTER_L.map(t => <CheckRow key={t}><Box $on><WhiteCheck /></Box>{t}</CheckRow>)}</FilterCol>
            <FilterCol>
              {FILTER_R.map((t, i) => <CheckRow key={t}><Box $on={i > 0}>{i > 0 && <WhiteCheck />}</Box>{t}</CheckRow>)}
            </FilterCol>
          </FilterGrid>
        </RightCol>
      </Main>
      <StatusBar>
        <StatusCell $w={1588}>mm</StatusCell>
        <StatusCell $w={174} />
        <StatusCell $w={156} />
      </StatusBar>
      <Dialog>
        <DialogTitle>
          <span>Footprint Libraries</span>
          <Ic $s={12} viewBox="0 0 12 12" fill="none"><path d="M1 1l10 10M11 1L1 11" stroke="#222" /></Ic>
        </DialogTitle>
        <DialogTabs>
          <DialogTab $w={91}>Global Libraries</DialogTab>
          <DialogTab $on $w={143}>Project Specific Libraries</DialogTab>
        </DialogTabs>
        <DialogBody>
          <Grid>
            <GridHead $left>Active</GridHead><GridHead>Nickname</GridHead><GridHead>Library Path</GridHead><GridHead>Library Format</GridHead><GridHead>Options</GridHead><GridHead>Description</GridHead><GridHead $last />
            <ActiveCell><Box $on><WhiteCheck /></Box></ActiveCell><GridCell>PCB Coils</GridCell><GridCell>{'${KIPRJMOD}/pcb_coils/'}</GridCell><GridCell>KiCad</GridCell><GridCell /><GridCell>auto-generated coil footprints</GridCell>
          </Grid>
        </DialogBody>
      </Dialog>
    </Win>
  );
}
